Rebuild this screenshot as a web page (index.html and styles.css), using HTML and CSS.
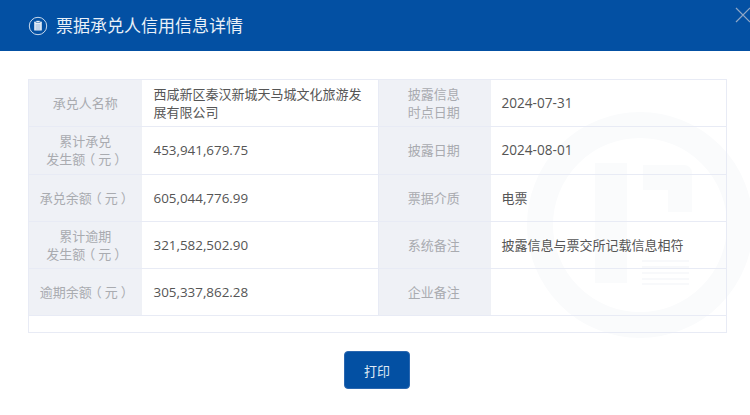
FILE: index.html
```html
<!DOCTYPE html>
<html lang="zh-CN">
<head>
<meta charset="utf-8">
<title>票据承兑人信用信息详情</title>
<link rel="stylesheet" href="styles.css">
</head>
<body>
<div class="dialog">
  <header class="head">
    <svg class="head-icon" width="20" height="20" viewBox="0 0 20 20">
      <circle cx="10" cy="10" r="8.7" fill="none" stroke="#c9d9ec" stroke-width="1"/>
      <rect x="6.2" y="5.6" width="7.6" height="9" rx="0.6" fill="#e6eef7"/>
      <rect x="8" y="4.6" width="4" height="2" fill="#e6eef7" stroke="#0350a3" stroke-width="0.5"/>
      <path d="M7.6 9h4.8M7.6 11h4.8M7.6 13h4.8" stroke="#7fa5d0" stroke-width="0.7"/>
    </svg>
    <h1 class="title">票据承兑人信用信息详情</h1>
    <svg class="close" width="16" height="16" viewBox="0 0 16 16">
      <path d="M1 1L15 15M15 1L1 15" stroke="#8fa6c6" stroke-width="1.2" fill="none"/>
    </svg>
  </header>
  <main class="body">
    <svg class="watermark" width="226" height="226" viewBox="0 0 226 226">
      <circle cx="113" cy="113" r="100" fill="none" stroke="#fafbfc" stroke-width="26"/>
      <rect x="68" y="51" width="32" height="120" fill="#fafbfc"/>
      <path d="M116 53h41a8 8 0 0 1 8 8v39h-24V78h-25z" fill="#fafbfc"/>
      <path d="M115 149h47M115 155h47M115 161h47M115 167h47M115 172h47" stroke="#f8f9fb" stroke-width="2"/>
    </svg>
    <table class="info">
      <colgroup>
        <col class="c-l1"><col class="c-v1"><col class="c-l2"><col class="c-v2">
      </colgroup>
      <tbody>
        <tr>
          <th>承兑人名称</th>
          <td>西咸新区秦汉新城天马城文化旅游发展有限公司</td>
          <th>披露信息<br>时点日期</th>
          <td class="date">2024-07-31</td>
        </tr>
        <tr class="tall">
          <th>累计承兑<br>发生额<span class="po">（</span>元<span class="pc">）</span></th>
          <td class="money">453,941,679.75</td>
          <th>披露日期</th>
          <td class="date">2024-08-01</td>
        </tr>
        <tr>
          <th>承兑余额<span class="po">（</span>元<span class="pc">）</span></th>
          <td class="money">605,044,776.99</td>
          <th>票据介质</th>
          <td>电票</td>
        </tr>
        <tr>
          <th>累计逾期<br>发生额<span class="po">（</span>元<span class="pc">）</span></th>
          <td class="money">321,582,502.90</td>
          <th>系统备注</th>
          <td>披露信息与票交所记载信息相符</td>
        </tr>
        <tr>
          <th>逾期余额<span class="po">（</span>元<span class="pc">）</span></th>
          <td class="money">305,337,862.28</td>
          <th>企业备注</th>
          <td></td>
        </tr>
        <tr class="blank"><td colspan="4"></td></tr>
      </tbody>
    </table>
    <div class="actions"><button class="print" type="button">打印</button></div>
  </main>
</div>
</body>
</html>
```
FILE: styles.css
```css
html, body {
  margin: 0;
  padding: 0;
  background: #fff;
}
body {
  width: 750px;
  height: 415px;
  overflow: hidden;
  font-family: "Open Sans", "Noto Sans CJK SC", sans-serif;
  text-spacing-trim: space-all;
}
.dialog {
  display: flex;
  flex-direction: column;
  height: 415px;
}
.head {
  flex: none;
  height: 51px;
  background: #0350a3;
  display: flex;
  align-items: center;
  padding-left: 28px;
  gap: 8px;
  position: relative;
}
.head-icon {
  flex: none;
}
.title {
  margin: 0;
  font-size: 17px;
  font-weight: 400;
  color: #e9f0f8;
  line-height: 51px;
}
.close {
  position: absolute;
  top: 7px;
  right: -1px;
}
.body {
  flex: 1;
  position: relative;
  padding: 28px 24px 0 28px;
}
.watermark {
  position: absolute;
  left: 527px;
  top: 61px;
}
.info {
  position: relative;
  width: 698px;
  border-collapse: collapse;
  table-layout: fixed;
  font-size: 13px;
  line-height: 18px;
  background: transparent;
}
.c-l1 { width: 113px; }
.c-v1 { width: 237px; }
.c-l2 { width: 112px; }
.c-v2 { width: 236px; }
.info th,
.info td {
  border: 1px solid #e8ebf5;
  height: 46px;
  padding: 0;
  box-sizing: content-box;
}
.info th {
  background: #eff1f6;
  color: #a9abb0;
  font-weight: 400;
  text-align: center;
  border-right: 0;
}
.info th:nth-child(3) {
  padding-right: 2px;
}
.info td {
  padding: 0 12px;
  color: #555;
  border-left: 0;
}
.info td:last-child {
  padding-left: 11px;
}
.info .tall th,
.info .tall td {
  padding-bottom: 1px;
}
.po,
.pc {
  font-feature-settings: "halt";
}
.po {
  margin-left: 3.5px;
  margin-right: 3px;
}
.pc {
  margin-left: 3px;
  margin-right: 3.5px;
}
.info .money {
  font-size: 13.4px;
}
.info .date {
  font-size: 13.6px;
}
.info .blank td {
  height: 16px;
  border-left: 1px solid #e8ebf5;
}
.actions {
  display: flex;
  justify-content: center;
  padding-top: 18px;
  position: relative;
}
.print {
  width: 66px;
  height: 38px;
  border: 1px solid #2a67b0;
  border-radius: 4px;
  background: #0350a3;
  color: #dfe9f4;
  font-family: inherit;
  font-size: 13px;
  padding: 0;
}
```
